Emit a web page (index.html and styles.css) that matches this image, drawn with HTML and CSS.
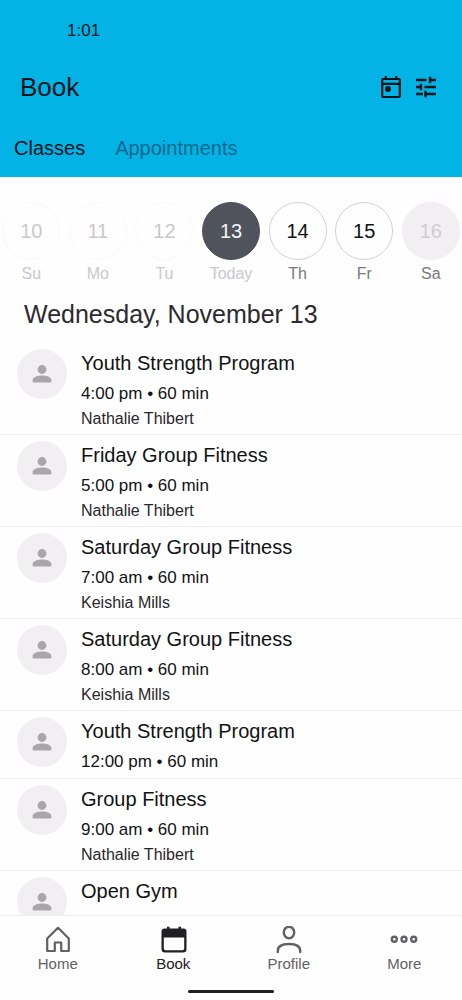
FILE: index.html
```html
<!DOCTYPE html>
<html lang="en">
<head>
<meta charset="utf-8">
<meta name="viewport" content="width=device-width, initial-scale=1">
<title>Book</title>
<link rel="stylesheet" href="styles.css">
</head>
<body>
<svg class="sprite" aria-hidden="true">
  <symbol id="person" viewBox="0 0 24 24"><circle cx="12" cy="7.5" r="4.4"/><path d="M2.6 19.5v-1.4c0-3.3 5.6-4.6 9.4-4.6s9.4 1.300 9.400 4.600v1.400q0 1.100-1.100 1.100H3.700q-1.100 0-1.100-1.100z"/></symbol>
</svg>
<div class="app">
  <header class="header">
    <div class="status"><time>1:01</time></div>
    <div class="titlebar">
      <h1 class="title">Book</h1>
      <div class="actions">
        <button class="action" type="button" aria-label="Go to today">
          <svg viewBox="0 0 24 24"><path fill="none" stroke="currentColor" stroke-width="2.200" d="M4.200 4h15.600q1 0 1 1v16q0 1-1 1H4.200q-1 0-1-1V5q0-1 1-1zM3.200 8.800h17.600M6.800 1V4M17.200 1V4"/><circle cx="9" cy="14" r="2.900" fill="currentColor"/></svg>
        </button>
        <button class="action" type="button" aria-label="Filters">
          <svg viewBox="0 0 24 24"><path fill="none" stroke="currentColor" stroke-width="2.400" d="M2 5h10.500M16 1.800v6.400M16 5h6M2 12h5M7 8.800v6.400M10.500 12h11.500M2 19h7M11.500 15.800v6.400M11.500 19h10.500"/></svg>
        </button>
      </div>
    </div>
    <nav class="tabs" aria-label="Booking type">
      <a class="tab tab-active" href="#classes">Classes</a>
      <a class="tab" href="#appointments">Appointments</a>
    </nav>
  </header>

  <main class="main">
    <div class="week">
      <button class="day day-past" type="button"><span class="num">10</span><span class="name">Su</span></button>
      <button class="day day-past" type="button"><span class="num">11</span><span class="name">Mo</span></button>
      <button class="day day-past" type="button"><span class="num">12</span><span class="name">Tu</span></button>
      <button class="day day-today" type="button"><span class="num">13</span><span class="name">Today</span></button>
      <button class="day" type="button"><span class="num">14</span><span class="name">Th</span></button>
      <button class="day" type="button"><span class="num">15</span><span class="name">Fr</span></button>
      <button class="day day-closed" type="button"><span class="num">16</span><span class="name">Sa</span></button>
    </div>
    <h2 class="date">Wednesday, November 13</h2>
    <ul class="list">
      <li class="row"><span class="avatar"><svg><use href="#person"/></svg></span><div><h3 class="class">Youth Strength Program</h3><p class="when">4:00 pm • 60 min</p><p class="coach">Nathalie Thibert</p></div></li>
      <li class="row"><span class="avatar"><svg><use href="#person"/></svg></span><div><h3 class="class">Friday Group Fitness</h3><p class="when">5:00 pm • 60 min</p><p class="coach">Nathalie Thibert</p></div></li>
      <li class="row"><span class="avatar"><svg><use href="#person"/></svg></span><div><h3 class="class">Saturday Group Fitness</h3><p class="when">7:00 am • 60 min</p><p class="coach">Keishia Mills</p></div></li>
      <li class="row"><span class="avatar"><svg><use href="#person"/></svg></span><div><h3 class="class">Saturday Group Fitness</h3><p class="when">8:00 am • 60 min</p><p class="coach">Keishia Mills</p></div></li>
      <li class="row"><span class="avatar"><svg><use href="#person"/></svg></span><div><h3 class="class">Youth Strength Program</h3><p class="when">12:00 pm • 60 min</p></div></li>
      <li class="row"><span class="avatar"><svg><use href="#person"/></svg></span><div><h3 class="class">Group Fitness</h3><p class="when">9:00 am • 60 min</p><p class="coach">Nathalie Thibert</p></div></li>
      <li class="row"><span class="avatar"><svg><use href="#person"/></svg></span><div><h3 class="class">Open Gym</h3><p class="when">11:00 am • 60 min</p></div></li>
    </ul>
  </main>

  <footer class="footer">
    <nav class="nav" aria-label="Main">
      <a class="item" href="#home">
        <svg viewBox="0 0 28 28"><path fill="none" stroke="currentColor" stroke-width="2.200" stroke-linejoin="round" d="M3.200 12.500 14 1.800l10.800 10.700V25h-7.600V16.500h-6.400V25H3.200z"/></svg>
        Home</a>
      <a class="item item-active" href="#book">
        <svg viewBox="0 0 28 28"><path fill="currentColor" fill-rule="evenodd" d="M8 .8h2.500V2.500h9V.8H22v1.700h2.500q3 0 3 3v17.500q0 3.500-3.500 3.500H6q-3.500 0-3.500-3.500V5.500q0-3 3-3H8zM4.800 11.500v11q0 1.800 1.800 1.800h16.800q1.800 0 1.800-1.800v-11z"/></svg>
        Book</a>
      <a class="item" href="#profile">
        <svg viewBox="0 0 28 28"><g fill="none" stroke="currentColor" stroke-width="2.400"><ellipse cx="14" cy="6.500" rx="5.200" ry="5.800"/><path stroke-linecap="round" d="M2.800 26v-1C2.800 20 8 18 14 18s11.200 2 11.200 7v1"/></g></svg>
        Profile</a>
      <a class="item" href="#more">
        <svg viewBox="0 0 28 28"><g fill="none" stroke="currentColor" stroke-width="2.400"><circle cx="4.300" cy="13.300" r="2.500"/><circle cx="14" cy="13.300" r="2.500"/><circle cx="23.700" cy="13.300" r="2.500"/></g></svg>
        More</a>
    </nav>
    <div class="indicator"></div>
  </footer>
</div>
</body>
</html>
```
FILE: styles.css
```css
* { box-sizing: border-box; }

body {
  margin: 0;
  background: #fefefe;
  color: #121214;
  font-family: "Liberation Sans", Arial, sans-serif;
}

h1, h2, h3, p, ul { margin: 0; padding: 0; font-weight: 400; }
ul { list-style: none; }
a { color: inherit; text-decoration: none; }
button { border: 0; padding: 0; background: none; color: inherit; font: inherit; }
svg { display: block; }
.sprite { display: none; }

.app { display: flex; flex-direction: column; height: 100vh; }

.header { flex: none; background: #03b3e6; color: #07141a; padding: 20px 24px 13px 20px; }
.status { padding-left: 47px; font-size: 17px; line-height: 22px; }
.titlebar { display: flex; align-items: center; justify-content: space-between; padding-top: 27px; }
.title { font-size: 26px; line-height: 36px; }
.actions { display: flex; gap: 11px; }
.action svg { width: 24px; height: 24px; }
.tabs { display: flex; gap: 30px; margin-left: -6px; padding-top: 27px; font-size: 20px; line-height: 32px; }
.tab { color: #05678b; }
.tab-active { color: #07141a; }

.main { flex: 1; min-height: 0; overflow: hidden; }

.week { display: flex; margin: 0 -2px; padding-top: 25px; }
.day { flex: 1; display: flex; flex-direction: column; align-items: center; gap: 4px; color: #7a787c; }
.num {
  display: grid;
  place-items: center;
  width: 58px;
  height: 58px;
  border: 1px solid #d3d1d5;
  border-radius: 50%;
  color: #121214;
  font-size: 20px;
}
.name { font-size: 16px; line-height: 20px; }
.day-past, .day-past .num { color: #cbc8cd; }
.day-past .num { border-color: #faf9fa; }
.day-today { color: #cbc8cd; }
.day-today .num { border-color: #50525c; background: #50525c; color: #f5f5f7; }
.day-closed .num { border-color: #f1eff2; background: #f1eff2; color: #cfccd0; }

.date { padding: 12px 24px 11px; color: #2c2a2e; font-size: 25px; line-height: 36px; }

.row { display: flex; gap: 14px; padding: 5px 17px 1px; border-bottom: 1px solid #f0eff1; }
.avatar {
  display: grid;
  place-items: center;
  flex: none;
  width: 50px;
  height: 50px;
  margin-top: 1px;
  border-radius: 50%;
  background: #f1eff2;
  color: #a8a6a9;
}
.avatar svg { width: 24px; height: 24px; fill: currentColor; }
.class { padding-bottom: 1px; font-size: 20px; line-height: 30px; }
.when { font-size: 17px; line-height: 30px; }
.coach { margin-bottom: 4px; color: #29272b; font-size: 16px; line-height: 20px; }

.footer { flex: none; border-top: 1px solid #ececed; background: #fefefe; padding: 10px 0 7px; }
.nav { display: flex; }
.item { flex: 1; display: flex; flex-direction: column; align-items: center; color: #626063; font-size: 15px; line-height: 20px; }
.item svg { width: 28px; height: 28px; }
.item-active { color: #202022; }
.indicator { width: 86px; height: 3px; margin: 16px auto 0; border-radius: 2px; background: #202022; }
```
